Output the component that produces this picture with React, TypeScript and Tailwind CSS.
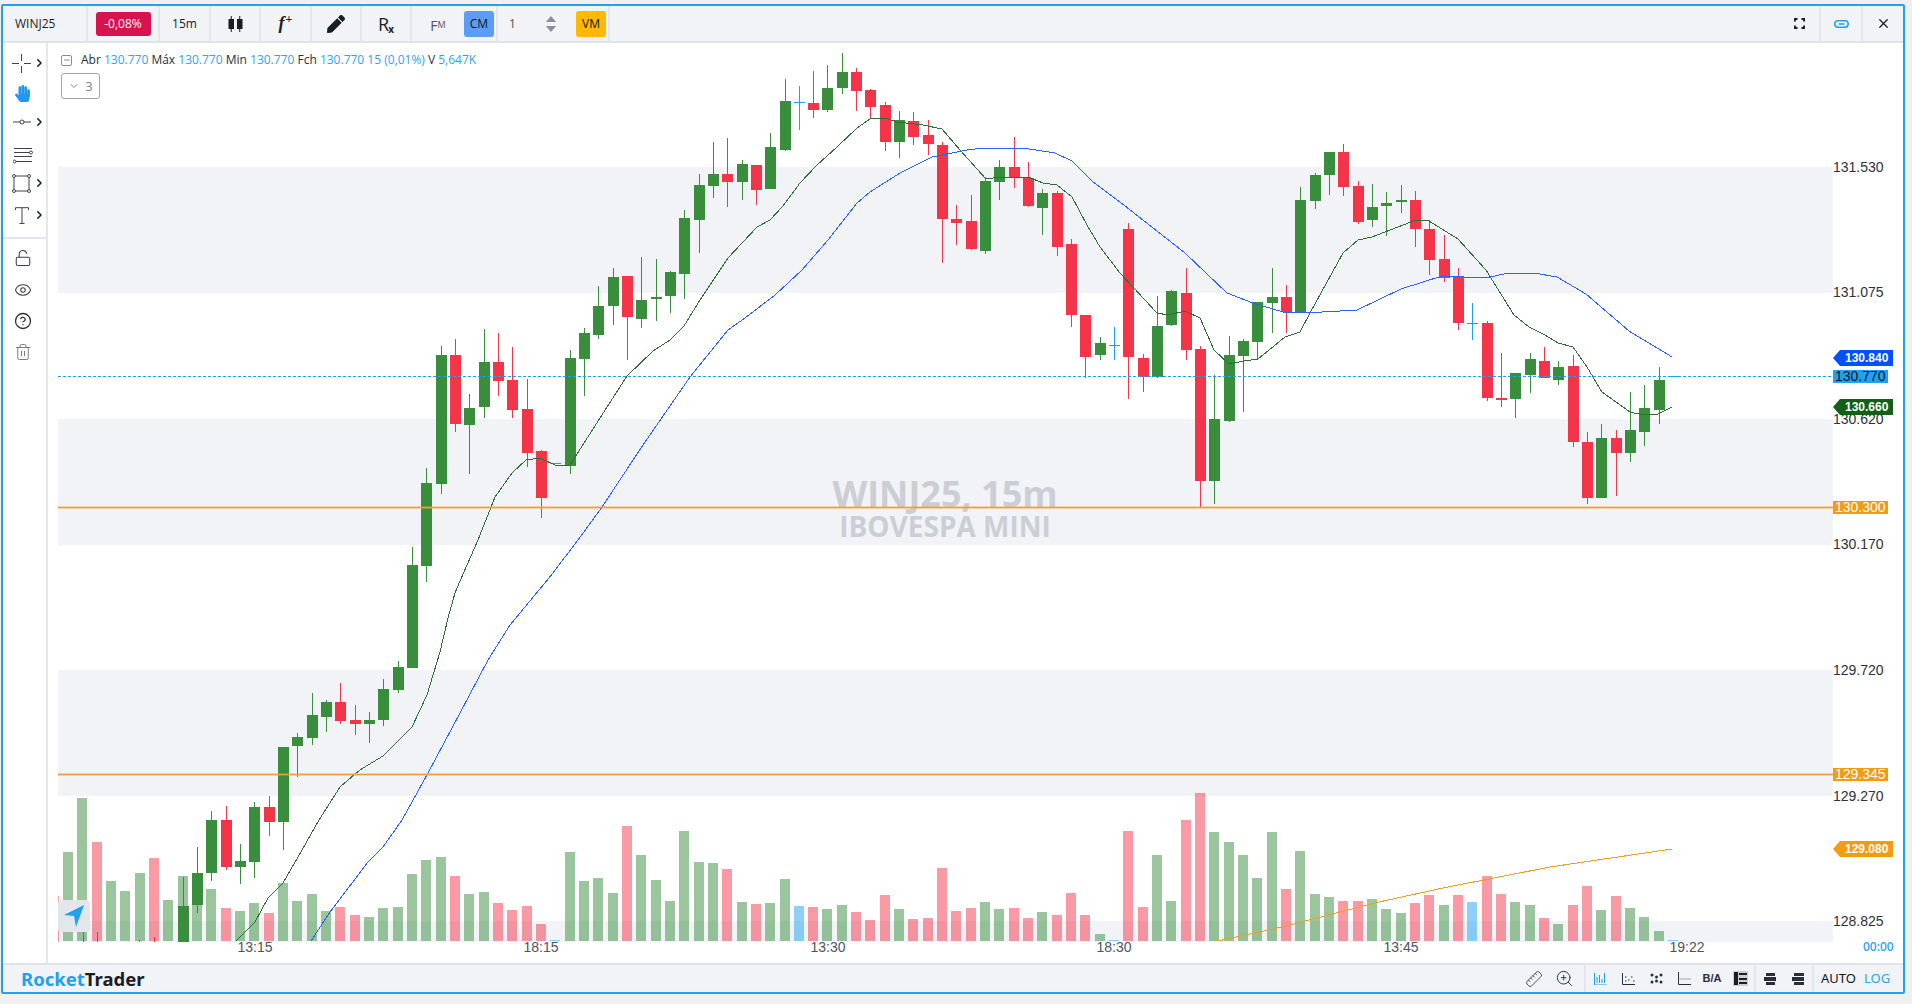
import { ChevronRight, ChevronDown, Minus, X, CircleHelp, Eye, LockOpen, Trash2, ZoomIn, Ruler } from "lucide-react";
import { FaHandPaper, FaPen } from "react-icons/fa";
import type { ReactNode } from "react";

const GREEN = "#388e3c";
const RED = "#f43549";
const BLUE = "#1da1f2";

// volume bars: colour + top y in the chart
const volumes: [string, number][] = [
  ["g", 852], ["g", 798], ["r", 842], ["g", 881], ["g", 891], ["g", 873], ["r", 858], ["g", 900], ["g", 876], ["g", 880],
  ["g", 889], ["r", 908], ["g", 911], ["g", 903], ["r", 913], ["g", 883], ["g", 901], ["g", 894], ["g", 911], ["r", 907],
  ["r", 915], ["g", 917], ["g", 908], ["g", 907], ["g", 874], ["g", 860], ["g", 857], ["r", 876], ["g", 894], ["g", 892],
  ["r", 903], ["r", 910], ["r", 906], ["r", 924], ["b", 940], ["g", 852], ["g", 881], ["g", 878], ["g", 893], ["r", 826],
  ["g", 855], ["g", 880], ["g", 901], ["g", 831], ["g", 862], ["g", 863], ["r", 869], ["g", 902], ["r", 904], ["g", 903],
  ["g", 879], ["b", 906], ["r", 907], ["g", 909], ["g", 905], ["r", 912], ["r", 920], ["r", 895], ["g", 909], ["r", 919],
  ["r", 918], ["r", 868], ["r", 911], ["r", 908], ["g", 902], ["g", 909], ["r", 908], ["r", 918], ["g", 912], ["r", 915],
  ["r", 893], ["r", 915], ["g", 934], ["b", 940], ["r", 831], ["r", 907], ["g", 855], ["g", 901], ["r", 820], ["r", 793],
  ["g", 832], ["g", 842], ["g", 855], ["g", 878], ["g", 832], ["r", 889], ["g", 851], ["g", 894], ["g", 897], ["r", 901],
  ["r", 901], ["g", 899], ["g", 909], ["g", 913], ["r", 903], ["r", 895], ["g", 905], ["r", 895], ["b", 902], ["r", 876],
  ["r", 894], ["g", 902], ["g", 905], ["r", 918], ["g", 924], ["r", 905], ["r", 886], ["g", 910], ["r", 896], ["g", 908],
  ["g", 917], ["g", 931], ["b", 940],
];

// candles: index, colour, body top, body bottom, wick top, wick bottom
const candles: [number, string, number, number, number, number][] = [
  [8, "g", 906, 945, 877, 945], [9, "g", 873, 905, 847, 913], [10, "g", 820, 873, 811, 881], [11, "r", 820, 867, 806, 870],
  [12, "g", 861, 867, 844, 884], [13, "g", 807, 862, 802, 878], [14, "r", 807, 822, 796, 836], [15, "g", 747, 822, 747, 850],
  [16, "g", 737, 746, 733, 777], [17, "g", 715, 738, 693, 745], [18, "g", 702, 717, 700, 732], [19, "r", 702, 721, 683, 724],
  [20, "r", 720, 724, 705, 735], [21, "g", 720, 724, 712, 743], [22, "g", 689, 720, 679, 726], [23, "g", 667, 690, 661, 693],
  [24, "g", 565, 668, 547, 668], [25, "g", 483, 566, 468, 582], [26, "g", 355, 484, 346, 494], [27, "r", 355, 424, 339, 432],
  [28, "g", 408, 425, 394, 474], [29, "g", 362, 407, 329, 418], [30, "r", 362, 381, 333, 396], [31, "r", 380, 410, 347, 418],
  [32, "r", 409, 453, 379, 467], [33, "r", 451, 498, 450, 518], [34, "b", 463, 464, 463, 464], [35, "g", 358, 466, 350, 474],
  [36, "g", 333, 359, 328, 396], [37, "g", 306, 335, 286, 339], [38, "g", 277, 306, 268, 325], [39, "r", 276, 317, 276, 360],
  [40, "g", 300, 319, 257, 328], [41, "g", 297, 299, 259, 321], [42, "g", 272, 296, 271, 313], [43, "g", 218, 274, 210, 299],
  [44, "g", 185, 220, 174, 253], [45, "g", 174, 186, 142, 198], [46, "r", 174, 182, 138, 207], [47, "g", 164, 182, 160, 200],
  [48, "r", 165, 190, 165, 205], [49, "g", 147, 189, 133, 189], [50, "g", 101, 150, 79, 151], [51, "b", 102, 103, 86, 130],
  [52, "r", 103, 110, 71, 118], [53, "g", 88, 110, 65, 112], [54, "g", 72, 88, 53, 94], [55, "r", 72, 91, 68, 111],
  [56, "r", 90, 107, 89, 118], [57, "r", 105, 142, 102, 151], [58, "g", 120, 142, 111, 158], [59, "r", 121, 137, 112, 145],
  [60, "r", 135, 144, 120, 155], [61, "r", 145, 219, 142, 263], [62, "r", 219, 223, 205, 245], [63, "r", 221, 249, 195, 250],
  [64, "g", 181, 251, 177, 254], [65, "g", 167, 182, 160, 200], [66, "r", 167, 177, 137, 188], [67, "r", 178, 206, 162, 207],
  [68, "g", 193, 208, 189, 235], [69, "r", 193, 247, 191, 256], [70, "r", 244, 315, 239, 327], [71, "r", 315, 357, 315, 378],
  [72, "g", 343, 355, 337, 360], [73, "b", 345, 346, 327, 360], [74, "r", 229, 357, 223, 399], [75, "r", 358, 377, 354, 392],
  [76, "g", 326, 377, 296, 378], [77, "g", 291, 325, 290, 326], [78, "r", 293, 350, 268, 360], [79, "r", 349, 481, 346, 507],
  [80, "g", 419, 481, 375, 504], [81, "g", 355, 421, 336, 422], [82, "g", 341, 356, 339, 412], [83, "g", 302, 342, 302, 360],
  [84, "g", 297, 303, 268, 333], [85, "r", 297, 312, 285, 333], [86, "g", 200, 312, 187, 312], [87, "g", 175, 201, 173, 209],
  [88, "g", 152, 175, 152, 195], [89, "r", 152, 187, 144, 196], [90, "r", 186, 222, 181, 224], [91, "g", 207, 220, 184, 227],
  [92, "g", 203, 206, 192, 236], [93, "g", 200, 202, 185, 213], [94, "r", 200, 229, 191, 247], [95, "r", 229, 260, 220, 275],
  [96, "r", 259, 278, 235, 282], [97, "r", 277, 323, 268, 330], [98, "b", 323, 324, 303, 340], [99, "r", 323, 398, 321, 401],
  [100, "r", 398, 400, 353, 407], [101, "g", 373, 399, 373, 418], [102, "g", 359, 375, 353, 393], [103, "r", 361, 378, 347, 378],
  [104, "g", 367, 380, 361, 385], [105, "r", 366, 442, 355, 447], [106, "r", 442, 498, 432, 504], [107, "g", 438, 498, 424, 498],
  [108, "r", 438, 453, 430, 496], [109, "g", 430, 453, 392, 462], [110, "g", 408, 432, 385, 446], [111, "g", 380, 410, 367, 424],
  [112, "b", 376, 377, 376, 377],
];

const greenMa =
  "236,941 255,922 268,898 283,883 302,850 319,820 340,787 355,774 363,768 383,756 412,727 427,695 440,652 448,618 455,593 460,581 478,540 495,497 512,473 526,460 540,458 557,466 570,465 600,418 627,376 653,351 670,340 684,326 700,300 728,258 757,227 770,220 783,206 800,183 817,165 837,147 857,128 870,119 885,118 897,122 923,125 942,129 960,150 986,179 1000,177 1028,177 1043,183 1057,185 1072,197 1087,225 1100,247 1120,273 1157,313 1168,315 1185,311 1200,318 1214,350 1229,364 1244,361 1258,359 1285,337 1300,332 1310,313 1343,253 1358,240 1372,237 1416,220 1429,221 1458,239 1486,270 1514,315 1529,327 1545,335 1558,343 1573,347 1587,367 1602,392 1630,412 1643,415 1658,414 1672,407";
const blueMa =
  "311,941 330,912 368,862 383,847 402,820 428,773 460,713 488,660 510,625 549,578 578,540 602,507 643,445 690,377 728,330 745,318 775,295 802,270 828,240 857,203 870,192 900,173 932,157 967,150 983,148 1023,148 1055,153 1072,161 1093,182 1120,202 1185,253 1227,293 1253,303 1283,312 1305,313 1357,310 1401,289 1442,276 1486,278 1508,273 1534,273 1557,277 1586,294 1629,331 1672,357";
const volMa = "1218,941 1282,927 1379,902 1443,888 1550,867 1672,849";

const priceTicks: [string, number][] = [
  ["131.530", 167], ["131.075", 292], ["130.620", 419], ["130.170", 544], ["129.720", 670], ["129.270", 796], ["128.825", 921],
];
const timeTicks: [string, number][] = [
  ["13:15", 255], ["18:15", 541], ["13:30", 828], ["18:30", 1114], ["13:45", 1401], ["19:22", 1687],
];

const fill = (c: string) => (c === "g" ? GREEN : c === "r" ? RED : BLUE);
const xAt = (i: number) => Math.round(68 + 14.33 * i);

function Chart() {
  return (
    <svg viewBox="48 43 1855 920" width={1855} height={920} className="block">
      <defs>
        <clipPath id="plot">
          <rect x={58} y={43} width={1775} height={899} />
        </clipPath>
      </defs>
      {[[167, 126], [419, 126], [670, 126], [921, 21]].map(([y, h]) => (
        <rect key={y} x={58} y={y} width={1775} height={h} fill="#f1f3f6" />
      ))}
      <text x={945} y={507} textAnchor="middle" fontFamily="'Open Sans', sans-serif" fontWeight={700} fontSize={36} fill="#cbced4">
        WINJ25, 15m
      </text>
      <text x={945} y={537} textAnchor="middle" fontFamily="'Open Sans', sans-serif" fontWeight={700} fontSize={28} fill="#cbced4">
        IBOVESPA MINI
      </text>
      <g clipPath="url(#plot)">
        <rect x={53} y={896} width={6} height={46} fill={RED} fillOpacity={0.5} />
        {volumes.map(([c, top], i) => (
          <rect key={i} x={xAt(i) - 5} y={top} width={10} height={941 - top} fill={fill(c)} fillOpacity={0.5} />
        ))}
        <rect x={83} y={932} width={1} height={10} fill={GREEN} />
        <rect x={97} y={932} width={1} height={10} fill={RED} />
        <rect x={139} y={940} width={1} height={2} fill={GREEN} />
        <rect x={154} y={937} width={1} height={5} fill={RED} />
        {candles.map(([i, c, bt, bb, wt, wb]) => {
          const x = xAt(i);
          return (
            <g key={i} fill={fill(c)}>
              <rect x={x} y={wt} width={1} height={wb - wt} />
              <rect x={x - 5} y={bt} width={11} height={bb - bt} />
            </g>
          );
        })}
        <polyline points={greenMa} fill="none" stroke="#2e6e33" strokeWidth={1} shapeRendering="crispEdges" />
        <polyline points={blueMa} fill="none" stroke="#2962ff" strokeWidth={1} shapeRendering="crispEdges" />
        <polyline points={volMa} fill="none" stroke="#f0a020" strokeWidth={1} shapeRendering="crispEdges" />
      </g>
      <line x1={58} x2={1833} y1={376.5} y2={376.5} stroke={BLUE} strokeDasharray="3 2" />
      {[507, 774].map((y) => (
        <g key={y}>
          <rect x={58} y={y - 1} width={1775} height={3} fill="#f0a030" fillOpacity={0.4} />
          <rect x={58} y={y} width={1775} height={1} fill="#e8a040" />
        </g>
      ))}
      <g fontFamily="'Liberation Sans', sans-serif" fontSize={14}>
        {priceTicks.map(([t, y]) => (
          <text key={t} x={1833} y={y + 5} fill="#2f3138">
            {t}
          </text>
        ))}
        {timeTicks.map(([t, x]) => (
          <text key={t} x={x} y={952} textAnchor="middle" fill="#50535e">
            {t}
          </text>
        ))}
        {[
          ["130.770", 376, BLUE, "#10131a"],
          ["130.300", 507, "#f39c12", "#ffffff"],
          ["129.345", 774, "#f39c12", "#ffffff"],
        ].map(([t, y, bg, fg]) => (
          <g key={t as string}>
            <rect x={1833} y={(y as number) - 6} width={55} height={13} fill={bg as string} />
            <text x={1835} y={(y as number) + 5} fill={fg as string}>
              {t}
            </text>
          </g>
        ))}
      </g>
      <g fontFamily="'Liberation Sans', sans-serif" fontSize={12} fontWeight={700} fill="#ffffff">
        {[
          ["130.840", 358, "#0050ff"],
          ["130.660", 407, "#135f15"],
          ["129.080", 849, "#f39c12"],
        ].map(([t, y, bg]) => {
          const c = y as number;
          return (
            <g key={t as string}>
              <polygon points={`1833,${c} 1840,${c - 8} 1893,${c - 8} 1893,${c + 8} 1840,${c + 8}`} fill={bg as string} />
              <text x={1845} y={c + 4}>
                {t}
              </text>
            </g>
          );
        })}
      </g>
      <text x={1863} y={951} fontFamily="'Noto Sans', sans-serif" fontSize={12} fontWeight={500} fill={BLUE}>
        00:00
      </text>
    </svg>
  );
}

function ToolCell({ className, children }: { className: string; children?: ReactNode }) {
  return <div className={`flex h-full shrink-0 items-center justify-center border-r-2 border-[#e3e6eb] ${className}`}>{children}</div>;
}

function TopBar() {
  return (
    <div className="flex h-[37px] shrink-0 items-stretch border-b-2 border-[#e0e3e8] bg-[#f1f3f6] text-[12px] text-[#1a1d24]">
      <ToolCell className="w-[85px] !justify-start pl-[12px]">WINJ25</ToolCell>
      <ToolCell className="w-[72px]">
        <span className="flex h-6 w-[55px] items-center justify-center rounded-[3px] bg-[#d6124f] text-white">-0,08%</span>
      </ToolCell>
      <ToolCell className="w-[51px]">15m</ToolCell>
      <ToolCell className="w-[50px]">
        <svg width="15" height="18" viewBox="0 0 15 18" fill="#1a1d24">
          <rect x="0.5" y="4" width="5.5" height="10" />
          <rect x="2.75" y="1" width="1" height="16" />
          <rect x="9" y="4" width="5.5" height="10" />
          <rect x="11.25" y="1" width="1" height="16" />
        </svg>
      </ToolCell>
      <ToolCell className="w-[51px]">
        <span className="font-['Liberation_Serif',serif] text-[18px] font-bold italic">
          f<sup className="ml-px text-[12px] not-italic">+</sup>
        </span>
      </ToolCell>
      <ToolCell className="w-[50px]">
        <FaPen size={18} color="#1a1d24" />
      </ToolCell>
      <ToolCell className="w-[50px]">
        <span className="text-[18px] leading-none">
          R<sub className="-ml-px text-[10px] font-bold">x</sub>
        </span>
      </ToolCell>
      <div className="flex w-[52px] shrink-0 items-center justify-center pt-[3px] text-[#50535e]">
        <span className="text-[14px]">F</span>
        <span className="text-[9px]">M</span>
      </div>
      <ToolCell className="w-[34px] !justify-start">
        <span className="flex h-[26px] w-[30px] items-center justify-center rounded-[3px] bg-[#5b9df5] text-[12px] text-[#10131a]">CM</span>
      </ToolCell>
      <div className="flex w-[72px] shrink-0 items-center pl-[11px] text-[#50535e]">
        1
        <svg width="10" height="16" viewBox="0 0 10 16" fill="#8a8d96" className="ml-[30px]">
          <path d="M5 0 10 6H0Z" />
          <path d="M5 16 0 10H10Z" />
        </svg>
      </div>
      <ToolCell className="w-[40px] !justify-start pl-[6px]">
        <span className="flex h-[26px] w-[30px] items-center justify-center rounded-[3px] bg-[#ffb900] text-[12px] text-[#10131a]">VM</span>
      </ToolCell>
      <div className="flex-1" />
      <ToolCell className="w-[42px]">
        <svg width="11" height="11" viewBox="0 0 11 11" fill="none" stroke="#1a1d24" strokeWidth="2">
          <path d="M0.9 3.5V0.9H3.5M7.5 0.9H10.1V3.5M10.1 7.5V10.1H7.5M3.5 10.1H0.9V7.5" />
        </svg>
      </ToolCell>
      <ToolCell className="w-[42px]">
        <svg width="15" height="8" viewBox="0 0 15 8" fill="none" stroke={BLUE} strokeWidth="1.5">
          <rect x="0.8" y="0.8" width="13.4" height="6.4" rx="3.2" />
          <path d="M4.5 4h6" />
        </svg>
      </ToolCell>
      <div className="flex w-[40px] shrink-0 items-center justify-center">
        <X size={15} strokeWidth={2} color="#1a1d24" />
      </div>
    </div>
  );
}

function SideItem({ className, children, more }: { className: string; children: ReactNode; more?: boolean }) {
  return (
    <div className={`flex shrink-0 items-center pl-[9px] ${className}`}>
      <div className="flex w-[21px] justify-center">{children}</div>
      {more && <ChevronRight size={14} strokeWidth={3} color="#16213a" className="ml-[2px]" />}
    </div>
  );
}

function SideBar() {
  const c = "#3f424b";
  return (
    <div className="flex w-[45px] shrink-0 flex-col border-r-2 border-[#e3e6eb] pt-[4px]">
      <SideItem className="h-[32px]" more>
        <svg width="19" height="19" viewBox="0 0 19 19" stroke={c}>
          <path d="M9.5 0v7M9.5 12v7M0 9.5h7M12 9.5h7" />
        </svg>
      </SideItem>
      <SideItem className="h-[28px]">
        <FaHandPaper size={17} color="#2196f3" />
      </SideItem>
      <SideItem className="h-[30px]" more>
        <svg width="18" height="6" viewBox="0 0 18 6" fill="none" stroke={c}>
          <path d="M0 3h7M11 3h7" />
          <circle cx="9" cy="3" r="2" />
        </svg>
      </SideItem>
      <SideItem className="h-[36px]">
        <svg width="20" height="17" viewBox="0 0 20 17" fill="none" stroke={c}>
          <path d="M1 1.5h18M1 5.5h16M1 9.5h18M3 14.5h16" />
          <circle cx="18" cy="5.5" r="1.5" fill="#fff" />
          <circle cx="1.5" cy="14.5" r="1.5" fill="#fff" />
        </svg>
      </SideItem>
      <SideItem className="h-[20px]" more>
        <svg width="19" height="19" viewBox="0 0 19 19" fill="none" stroke={c}>
          <rect x="2" y="2" width="15" height="15" />
          <circle cx="2" cy="2" r="1.5" fill="#fff" />
          <circle cx="17" cy="2" r="1.5" fill="#fff" />
          <circle cx="2" cy="17" r="1.5" fill="#fff" />
          <circle cx="17" cy="17" r="1.5" fill="#fff" />
        </svg>
      </SideItem>
      <SideItem className="h-[44px]" more>
        <svg width="14" height="17" viewBox="0 0 14 17" fill="none" stroke={c}>
          <path d="M0.5 3V0.7H13.5V3M7 0.7V16.5M4.5 16.5H9.5" />
        </svg>
      </SideItem>
      <div className="h-[2px] shrink-0 bg-[#e3e6eb]" />
      <SideItem className="h-[38px]">
        <LockOpen size={18} strokeWidth={1.4} color={c} />
      </SideItem>
      <SideItem className="h-[26px]">
        <Eye size={18} strokeWidth={1.4} color={c} />
      </SideItem>
      <SideItem className="h-[36px]">
        <CircleHelp size={18} strokeWidth={1.7} color="#2a2e39" />
      </SideItem>
      <SideItem className="h-[26px]">
        <Trash2 size={18} strokeWidth={1.2} color="#6c6f78" />
      </SideItem>
    </div>
  );
}

function Legend() {
  const v = "text-[#2ea3f2]";
  return (
    <div className="absolute left-[13px] top-[9px] font-['Open_Sans',sans-serif] text-[12px] leading-4 text-[#2a2e39]">
      <div className="flex items-center">
        <span className="flex h-[11px] w-[11px] items-center justify-center rounded-[2px] border border-[#8a8d96]">
          <Minus size={8} color="#50535e" />
        </span>
        <span className="ml-[9px] whitespace-pre">
          Abr <span className={v}>130.770</span> Máx <span className={v}>130.770</span> Min <span className={v}>130.770</span> Fch{" "}
          <span className={v}>130.770 15 (0,01%)</span> V <span className={v}>5,647K</span>
        </span>
      </div>
      <div className="mt-[5px] flex h-[26px] w-[39px] items-center justify-center gap-[5px] rounded-[3px] border border-[#a0a3ab] text-[13px] text-[#808389]">
        <ChevronDown size={12} />3
      </div>
    </div>
  );
}

function BottomBar() {
  const ic = "#2a2e39";
  const slot = "flex w-[28px] shrink-0 items-center justify-center";
  return (
    <div className="flex h-[29px] shrink-0 items-stretch border-t-2 border-[#e0e3e8] bg-[#f1f3f6]">
      <div className="pl-[18px] font-['Noto_Sans',sans-serif] text-[18.5px] font-bold leading-[27px] text-[#1a1d24]">
        <span className="text-[#1da1f2]">Rocket</span>Trader
      </div>
      <div className="ml-auto flex items-center border-r-2 border-[#e3e6eb] pr-[4px]">
        <div className="flex w-[31px] justify-center">
          <Ruler size={18} strokeWidth={1.1} color={ic} className="-scale-x-100" />
        </div>
        <div className="flex w-[31px] justify-center">
          <ZoomIn size={19} strokeWidth={1.2} color={ic} />
        </div>
      </div>
      <div className="flex items-center border-r-2 border-[#e3e6eb]">
        <div className={slot}>
          <svg width="13" height="13" viewBox="0 0 13 13" stroke={BLUE}>
            <path d="M.5 1v12h12.5M3 11V5M5.5 11V3M8 11V7M10.5 11V1" fill="none" />
          </svg>
        </div>
        <div className={slot}>
          <svg width="13" height="13" viewBox="0 0 13 13" fill="none" stroke={ic}>
            <path d="M.5 1v11.5H13M3 5h1.5M6 8h1.5M9 5h1.5M11 9h1.5M3 9h1.5" />
          </svg>
        </div>
        <div className={slot}>
          <svg width="13" height="12" viewBox="0 0 13 12" fill={ic}>
            <circle cx="2" cy="2" r="1.5" /><circle cx="6.5" cy="4" r="1.5" /><circle cx="11" cy="2" r="1.5" />
            <circle cx="2" cy="9" r="1.5" /><circle cx="6.5" cy="8" r="1.5" /><circle cx="11" cy="9" r="1.5" />
          </svg>
        </div>
        <div className={slot}>
          <svg width="13" height="13" viewBox="0 0 13 13" fill="none" stroke={ic}>
            <path d="M.5 0v12.5H13" />
            <path d="M.5 7H13" stroke="#a0a3ab" />
          </svg>
        </div>
        <div className={`${slot} font-['Liberation_Sans',sans-serif] text-[11px] font-bold text-[#2a2e39]`}>B/A</div>
        <div className={slot}>
          <span className="flex h-[15px] w-[15px] gap-[1px] bg-[#ccced3] p-[1px]">
            <span className="w-[4px] bg-[#1a1d24]" />
            <span className="flex flex-1 flex-col justify-between py-[1px]">
              <span className="h-[2px] bg-[#1a1d24]" />
              <span className="h-[2px] bg-[#1a1d24]" />
              <span className="h-[2px] bg-[#1a1d24]" />
            </span>
          </span>
        </div>
      </div>
      <div className="flex items-center border-r-2 border-[#e3e6eb]">
        <div className={slot}>
          <svg width="12" height="12" viewBox="0 0 12 12" fill="#2a2e39">
            <rect x="2" y="0" width="9" height="3" /><rect x="0" y="4" width="12" height="4" /><rect x="2" y="9" width="9" height="3" />
          </svg>
        </div>
        <div className={slot}>
          <svg width="12" height="12" viewBox="0 0 12 12" fill="#2a2e39">
            <rect x="2" y="0" width="10" height="3" /><rect x="0" y="4" width="12" height="4" /><rect x="2" y="9" width="10" height="3" />
          </svg>
        </div>
      </div>
      <div className="flex w-[89px] items-center gap-[8px] pl-[7px] font-['Noto_Sans',sans-serif] text-[13px]">
        <span className="text-[#10131a]">AUTO</span>
        <span className="text-[#2ea3f2]">LOG</span>
      </div>
    </div>
  );
}

export default function App() {
  return (
    <div className="h-screen w-full bg-[#f0f0f0] pb-[10px] pl-px pr-[7px] pt-1 font-['Open_Sans',sans-serif]">
      <div className="flex h-full flex-col rounded-[2px] border-2 border-[#1da1f2] bg-white">
        <TopBar />
        <div className="flex min-h-0 flex-1">
          <SideBar />
          <div className="relative min-w-0 flex-1 overflow-hidden">
            <Chart />
            <Legend />
            <div className="absolute bottom-[31px] left-[10px] flex h-8 w-8 items-center justify-center rounded-[4px] bg-[#e3e6ea]">
              <svg width="20" height="22" viewBox="0 0 20 22" fill={BLUE}>
                <path d="M0 10 20 0 12 22 10 11Z" />
              </svg>
            </div>
          </div>
        </div>
        <BottomBar />
      </div>
    </div>
  );
}
